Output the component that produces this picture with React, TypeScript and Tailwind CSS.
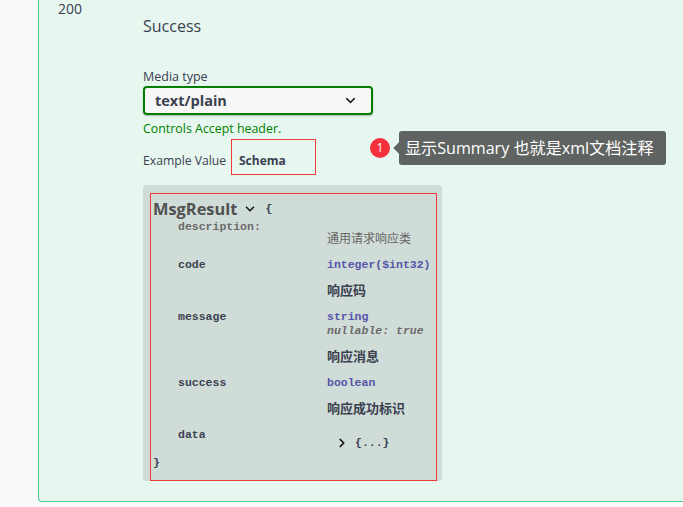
import React from 'react';
import { ChevronDown, ChevronRight } from 'lucide-react';

const mono = 'font-["Liberation_Mono",monospace] text-[11.5px] font-bold leading-[14px]';
const cjk = 'leading-[18px]';

// one property of the model: name on the left, type and description on the right
const Prop = ({ name, type, note, desc }: { name: string; type: string; note?: string; desc: string }) => (
  <div className="flex pb-[11px]">
    <div className={`${mono} w-[174px] pl-[25px] text-[#3b4151]`}>{name}</div>
    <div className="flex-1">
      <div className={`${mono} text-[#55a] mb-[9px]`}>{type}</div>
      {note && <div className={`${mono} italic text-[#6b6b6b] -mt-[9px] mb-[9px]`}>{note}</div>}
      <div className={`${cjk} text-[13px] font-bold text-[#3b4151]`}>{desc}</div>
    </div>
  </div>
);

const App: React.FC = () => {
  return (
    <div className='relative h-[507px] w-[683px] overflow-hidden bg-[#fafafa] font-["Open_Sans","Noto_Sans_CJK_SC",sans-serif] text-[#3b4151]'>
      <div className="ml-[38px] h-[502px] w-[660px] rounded-bl border-b border-l border-[#49cc90] bg-[#e7f6ef]">
        <div className="flex">
          <div className="w-[104px] pl-[19px] pt-[1px] text-[14px] leading-[16px]">200</div>
          <div className="w-[299px]">
            <div className="pt-[16px] text-[16px] leading-[20px]">Success</div>
            <div className="mt-[33px] text-[12.5px] leading-[16px]">Media type</div>
            <div className="mt-[1px] flex h-[29px] w-[230px] items-center justify-between rounded-[4px] border-2 border-[#008000] bg-[#f7f7f7] pl-[10px] pr-[13px] text-[14.5px] font-bold shadow-[0_1px_2px_rgba(0,0,0,0.25)]">
              <span>text/plain</span>
              <ChevronDown size={15} strokeWidth={2.5} className="text-[#222]" />
            </div>
            <div className="mt-[6px] text-[12.4px] leading-[16px] text-[#008000]">Controls Accept header.</div>
            <div className="mt-[2px] flex items-center text-[12.2px]">
              <span className="w-[88px] pt-[8px]">Example Value</span>
              <div className="flex h-[36px] w-[85px] items-center border border-[#f33838] pl-[7px] pt-[8px] text-[12px] font-bold">Schema</div>
            </div>
            <div className="mt-[10px] h-[296px] rounded-[4px] bg-[#d0dcd7] pl-[7px] pr-[5px] pt-[8px]">
              <div className="h-[288px] border border-[#f33838] pl-[2px]">
                <div className="flex h-[26px] items-center pt-[4px]">
                  <span className="text-[16.4px] font-bold text-[#505050]">MsgResult</span>
                  <ChevronDown size={14} strokeWidth={3} className="ml-[6px] text-[#222]" />
                  <span className={`${mono} ml-[8px]`}>{'{'}</span>
                </div>
                <div className="flex pb-[10px]">
                  <div className={`${mono} w-[174px] pl-[25px] text-[#6b6b6b]`}>description:</div>
                  <div className={`${cjk} flex-1 pt-[10px] text-[12px] text-[#666]`}>通用请求响应类</div>
                </div>
                <Prop name="code" type="integer($int32)" desc="响应码" />
                <Prop name="message" type="string" note="nullable: true" desc="响应消息" />
                <Prop name="success" type="boolean" desc="响应成功标识" />
                <div className="flex h-[22px]">
                  <div className={`${mono} w-[174px] pl-[25px]`}>data</div>
                  <div className="flex flex-1 items-end pl-[8px]">
                    <ChevronRight size={14} strokeWidth={3} className="text-[#111]" />
                    <span className={`${mono} ml-[6px]`}>{'{...}'}</span>
                  </div>
                </div>
                <div className={`${mono} mt-[6px]`}>{'}'}</div>
              </div>
            </div>
          </div>
        </div>
      </div>

      {/* annotation laid over the page */}
      <div className="absolute left-[370px] top-[138px] flex h-[20px] w-[20px] items-center justify-center rounded-full bg-[#f5303d] text-[12px] text-white">1</div>
      <div className="absolute left-[399px] top-[131px] flex h-[34px] w-[267px] items-center rounded-[3px] bg-[#5f6361] pl-[6px] text-[16.1px] whitespace-nowrap text-white">
        <span className="absolute -left-[4px] top-[13px] h-[8px] w-[8px] rotate-45 bg-[#5f6361]" />
        显示Summary 也就是xml文档注释
      </div>
    </div>
  );
};

export default App;
